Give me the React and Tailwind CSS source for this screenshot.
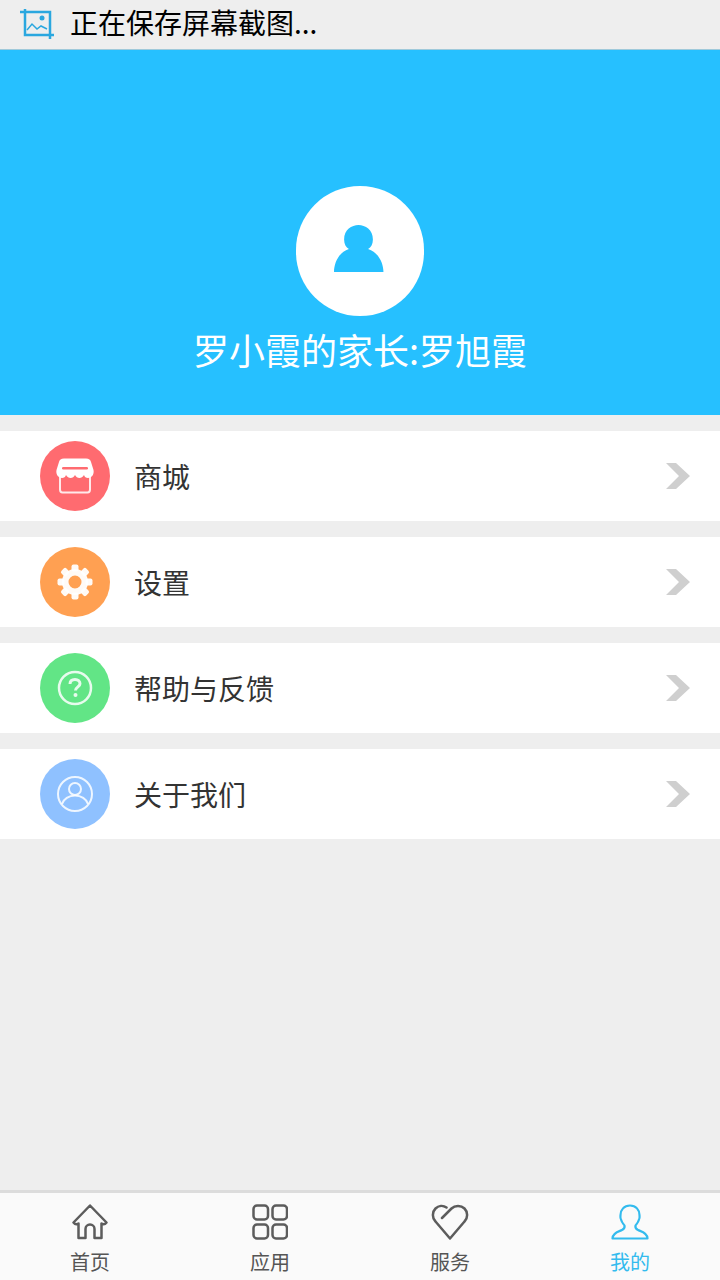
import React from 'react';

const cjk = { fontFamily: '"Noto Sans CJK SC", "Noto Sans", sans-serif' };

const ShopIcon = () => (
  <svg width="40" height="36" viewBox="0 0 40 36" fill="none">
    <path d="M5 18V31.500C5 33 6 34.500 7.500 34.500H32.500C34 34.500 35 33 35 31.500V18" stroke="#fff" strokeOpacity="0.85" strokeWidth="2" />
    <path d="M9 0.500H31C34 0.500 35.500 2 36 4L38.500 12C39.500 17 36 20 33 20C31 20 29.500 19 29 17C28 19 26 20 24.500 20C22.500 20 21 19 20 17C19 19 17.500 20 15.500 20C14 20 12 19 11 17C10.500 19 9 20 7 20C4 20 0.500 17 1.500 12L4 4C4.500 2 6 0.500 9 0.500Z" fill="#fff" />
    <rect x="7" y="9" width="26" height="2.500" rx="1.250" fill="#ff6b70" />
  </svg>
);

const GearIcon = () => (
  <svg width="38" height="38" viewBox="0 0 38 38">
    <g fill="#fff" fillOpacity="0.95">
      <path fillRule="evenodd" d="M19 6A13 13 0 1 0 19 32A13 13 0 1 0 19 6ZM19 12.500A6.500 6.500 0 1 1 19 25.500A6.500 6.500 0 1 1 19 12.500Z" />
      {[0, 45, 90, 135, 180, 225, 270, 315].map((a) => (
        <rect key={a} x="15.500" y="1.500" width="7" height="7" rx="2" transform={`rotate(${a} 19 19)`} />
      ))}
    </g>
  </svg>
);

const HelpIcon = () => (
  <svg width="36" height="36" viewBox="0 0 36 36" fill="none">
    <circle cx="18" cy="18" r="16" stroke="#fff" strokeOpacity="0.85" strokeWidth="2.500" />
    <path d="M13 14C13 11.200 15 9.500 18 9.500C21 9.500 23 11.200 23 13.800C23 16.800 18.500 17 18.500 20.500" stroke="#fff" strokeOpacity="0.85" strokeWidth="3" />
    <circle cx="18.500" cy="25" r="2" fill="#fff" fillOpacity="0.85" />
  </svg>
);

const AboutIcon = () => (
  <svg width="38" height="38" viewBox="0 0 38 38" fill="none" stroke="#fff" strokeOpacity="0.85" strokeWidth="2">
    <circle cx="19" cy="19" r="17" />
    <circle cx="19" cy="14" r="6" />
    <path d="M6 29C7.500 24 13 20.500 19 20.500C25 20.500 30.500 24 32 29" />
  </svg>
);

const Chevron = () => (
  <svg width="26" height="28" viewBox="0 0 26 28">
    <path d="M1 1H11L25 14L11 27H1L14 14Z" fill="#cfcfcf" />
  </svg>
);

const HomeIcon = () => (
  <svg width="36" height="36" viewBox="0 0 36 36" fill="none" stroke="#5c5c5c" strokeWidth="2.500" strokeLinejoin="round">
    <path d="M18 1.500L34.500 18.500C33 20.500 31 20.500 29.500 19.500V34H22.500V25C22.500 22.500 20.500 20.500 18 20.500C15.500 20.500 13.500 22.500 13.500 25V34H6.500V19.500C5 20.500 3 20.500 1.500 18.500Z" />
  </svg>
);

const AppsIcon = () => (
  <svg width="36" height="36" viewBox="0 0 36 36" fill="none" stroke="#5c5c5c" strokeWidth="2.500">
    <rect x="1.500" y="1.500" width="14.500" height="14" rx="3.500" />
    <rect x="20.500" y="1.500" width="14.500" height="14" rx="3.500" />
    <rect x="1.500" y="20.500" width="14.500" height="14" rx="3.500" />
    <rect x="20.500" y="20.500" width="14.500" height="14" rx="3.500" />
  </svg>
);

const HeartIcon = () => (
  <svg width="38" height="36" viewBox="0 0 38 36" fill="none" stroke="#5c5c5c" strokeWidth="2.500" strokeLinecap="round" strokeLinejoin="round">
    <path d="M11 14L20.500 4.500C24 1 30 1 33.500 4.500C37 8 37 14 33.500 17.500L19 34.500L4.500 17.500C1 14 1 8 4.500 4.500C7.500 1.500 12 1 15.500 3.500" />
  </svg>
);

const UserIcon = () => (
  <svg width="38" height="36" viewBox="0 0 38 36" fill="none" stroke="#33bbee" strokeWidth="2.200" strokeLinejoin="round">
    <path d="M19 1.500C25 1.500 28.500 6 28.500 11C28.500 13 29 14 28 15.500C27 19 25.500 20 24.500 21.500C24 23.500 25 25 27 26C30 27.500 36.500 28.500 36.500 34.500H1.500C1.500 28.500 8 27.500 11 26C13 25 14 23.500 13.500 21.500C12.500 20 11 19 10 15.500C9 14 9.500 13 9.500 11C9.500 6 13 1.500 19 1.500Z" />
  </svg>
);

const rows = [
  { label: '商城', color: 'bg-[#ff6b70]', icon: <ShopIcon /> },
  { label: '设置', color: 'bg-[#ffa052]', icon: <GearIcon /> },
  { label: '帮助与反馈', color: 'bg-[#62e586]', icon: <HelpIcon /> },
  { label: '关于我们', color: 'bg-[#8fc1ff]', icon: <AboutIcon /> },
];

const tabs = [
  { label: '首页', icon: <HomeIcon /> },
  { label: '应用', icon: <AppsIcon /> },
  { label: '服务', icon: <HeartIcon /> },
  { label: '我的', icon: <UserIcon />, active: true },
];

const App = () => {
  return (
    <div className="flex h-[1280px] w-[720px] flex-col overflow-hidden bg-[#eeeeee]" style={cjk}>
      <div className="flex h-[50px] shrink-0 items-center bg-[#eeeeee] pl-[20px] shadow-[inset_0_-1px_0_#9fc9da]">
        <svg className="mt-[-2px]" width="34" height="30" viewBox="0 0 34 30" fill="none" stroke="#2aa7df" strokeWidth="2.500">
          <path d="M0 3H30V30" />
          <path d="M5 0V26H34" />
          <path d="M7 21L12 15L17 20L21 17L27 20" strokeWidth="1.500" />
          <circle cx="22" cy="9" r="2.500" fill="#2aa7df" stroke="none" />
        </svg>
        <span className="ml-[16px] pb-[6px] text-[28px] leading-none text-black">正在保存屏幕截图...</span>
      </div>

      <div className="flex h-[365px] shrink-0 flex-col items-center bg-[#26c0ff] pt-[136px]">
        <div className="flex h-[130px] w-[128px] items-center justify-center rounded-full bg-white">
          <svg className="mb-[4px] mr-[3px]" width="51" height="48" viewBox="0 0 52 50">
            <path d="M26 0C33 0 41 5 41 15C41 20 39 23 36 25C46 28 52 39 52 49H0.500C0.500 39 6 28 16 25C13 23 11 20 11 15C11 5 19 0 26 0Z" fill="#26c0ff" />
          </svg>
        </div>
        <div className="mt-[11px] text-[36px] leading-[44px] text-white">罗小霞的家长:罗旭霞</div>
      </div>

      <div className="flex shrink-0 flex-col gap-4 pt-4">
        {rows.map((row) => (
          <div key={row.label} className="flex h-[90px] items-center bg-white pl-10 pr-[29px]">
            <div className={`flex h-[70px] w-[70px] shrink-0 items-center justify-center rounded-full ${row.color}`}>
              {row.icon}
            </div>
            <span className="ml-[24px] flex-1 text-[28px] leading-none text-[#333333]">{row.label}</span>
            <Chevron />
          </div>
        ))}
      </div>

      <div className="mt-auto grid h-[90px] shrink-0 grid-cols-4 border-t-[3px] border-[#dcdcdc] bg-[#fafafa]">
        {tabs.map((tab) => (
          <div key={tab.label} className="flex flex-col items-center pt-[10px]">
            <div className="flex h-[38px] items-center justify-center">{tab.icon}</div>
            <span className={`mt-[9px] text-[20px] leading-[24px] ${tab.active ? 'text-[#33bbee]' : 'text-[#555555]'}`}>
              {tab.label}
            </span>
          </div>
        ))}
      </div>
    </div>
  );
};

export default App;
